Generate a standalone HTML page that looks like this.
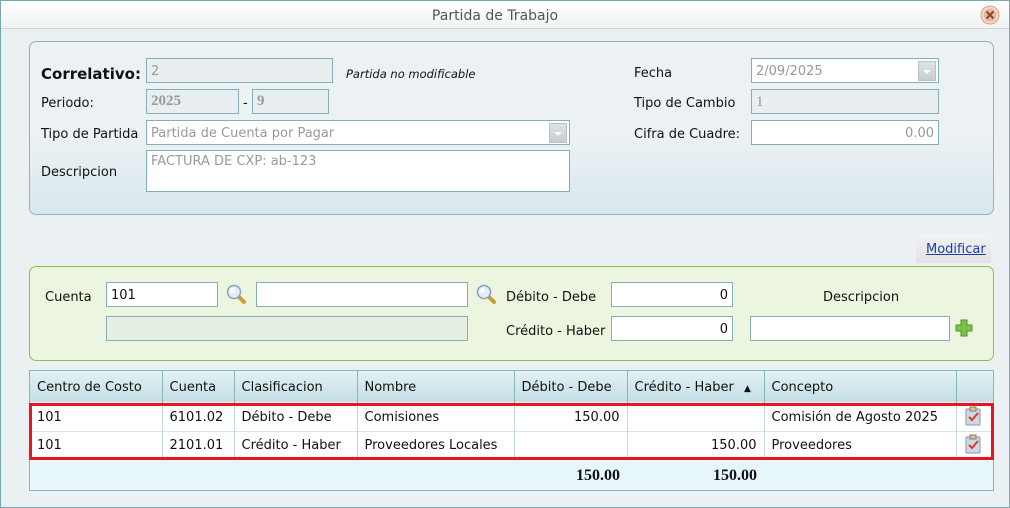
<!DOCTYPE html>
<html><head><meta charset="utf-8"><style>
*{box-sizing:border-box;margin:0;padding:0}
body{width:1010px;height:508px;overflow:hidden;font-family:"DejaVu Sans","Liberation Sans",sans-serif;font-size:13px;color:#111;background:#ebf0f2;position:relative}
.a{position:absolute}
.frame{left:0;top:0;width:1010px;height:508px;border:1px solid #7aa7ae}
.tb{left:1px;top:1px;width:1008px;height:28px;background:linear-gradient(#fff,#f0f2f3);border-bottom:1px solid #d0d6d8}
.in{position:absolute;border:1px solid #82b0b5;background:#fff;height:25px;font-size:13px;padding:5px 4px 0;color:#999;white-space:nowrap;overflow:hidden}
.g{background:#e9eff1}
.lbl{position:absolute;font-size:13px;white-space:nowrap;margin-top:2px}
.dd{position:absolute;top:2px;right:2px;width:18px;height:20px;background:linear-gradient(#dde3e5,#c5cdd0);border:1px solid #b8c2c5}
.dd:after{content:"";position:absolute;left:4px;top:8px;border-left:4px solid transparent;border-right:4px solid transparent;border-top:4px solid #fff}
table{border-collapse:collapse;font-size:13px}
td{border-right:1px solid #c8d8dc;padding:0 7px;white-space:nowrap}
.r{text-align:right}
.ft{border:0;font-weight:bold;font-family:'Liberation Serif',serif;font-size:16px;padding-top:2px}
</style></head><body>
<div class="a frame"></div>
<div class="a tb"></div>
<div class="lbl" style="left:0;width:990px;text-align:center;top:6px;color:#555;font-size:14px">Partida de Trabajo</div>
<svg class="a" style="left:980px;top:5px" width="20" height="20"><circle cx="10" cy="10" r="9" fill="#f4d9cc" stroke="#d7a08a"/><circle cx="10" cy="10" r="6.5" fill="#e8b8a2"/><path d="M6.5 6.5l7 7M13.5 6.5l-7 7" stroke="#8a4a2a" stroke-width="2"/></svg>

<div class="a" style="left:29px;top:41px;width:965px;height:174px;border:1px solid #8ab6bb;border-radius:7px;background:linear-gradient(#ecf1f3 55%,#d9e8ee)"></div>
<div class="lbl" style="left:41px;top:63px;font-weight:bold;font-size:15px">Correlativo:</div>
<div class="in g" style="left:146px;top:58px;width:187px">2</div>
<div class="lbl" style="left:346px;top:65px;font-style:italic;font-size:11.5px">Partida no modificable</div>
<div class="lbl" style="left:41px;top:94px">Periodo:</div>
<div class="in g" style="left:146px;top:89px;width:93px;font-weight:bold;font-family:'Liberation Serif',serif;font-size:15px;padding-top:3px">2025</div>
<div class="lbl" style="left:243px;top:94px">-</div>
<div class="in g" style="left:252px;top:89px;width:77px;font-weight:bold;font-family:'Liberation Serif',serif;font-size:15px;padding-top:3px">9</div>
<div class="lbl" style="left:41px;top:125px">Tipo de Partida</div>
<div class="in" style="left:146px;top:120px;width:424px">Partida de Cuenta por Pagar<div class="dd"></div></div>
<div class="lbl" style="left:41px;top:163px">Descripcion</div>
<div class="in" style="left:146px;top:150px;width:424px;height:42px;padding-top:3px">FACTURA DE CXP: ab-123</div>
<div class="lbl" style="left:634px;top:64px">Fecha</div>
<div class="in" style="left:751px;top:58px;width:188px">2/09/2025<div class="dd"></div></div>
<div class="lbl" style="left:634px;top:94px">Tipo de Cambio</div>
<div class="in g" style="left:751px;top:89px;width:188px;font-family:'Liberation Serif',serif;font-size:15px;padding-top:4px">1</div>
<div class="lbl" style="left:634px;top:125px">Cifra de Cuadre:</div>
<div class="in" style="left:751px;top:120px;width:188px;text-align:right">0.00</div>

<div class="a" style="left:916px;top:235px;width:75px;height:28px;background:linear-gradient(#f2f2f2,#e2e2e2)"></div>
<div class="lbl" style="left:926px;top:240px;color:#1a3fa8;text-decoration:underline">Modificar</div>

<div class="a" style="left:29px;top:266px;width:965px;height:95px;border:1px solid #8fc04a;border-radius:7px;background:#ebf5df"></div>
<div class="lbl" style="left:45px;top:288px">Cuenta</div>
<div class="in" style="left:106px;top:282px;width:112px;color:#111">101</div>
<svg class="a" style="left:225px;top:283px" width="22" height="22"><path d="M13 13l6 6" stroke="#c9a030" stroke-width="4" stroke-linecap="round"/><circle cx="9" cy="9" r="6.5" fill="#dfeefa" stroke="#8aa2b8" stroke-width="1.5"/><circle cx="7.5" cy="7.5" r="2.5" fill="#fff"/></svg>
<div class="in" style="left:256px;top:282px;width:212px"></div>
<svg class="a" style="left:475px;top:283px" width="22" height="22"><path d="M13 13l6 6" stroke="#c9a030" stroke-width="4" stroke-linecap="round"/><circle cx="9" cy="9" r="6.5" fill="#dfeefa" stroke="#8aa2b8" stroke-width="1.5"/><circle cx="7.5" cy="7.5" r="2.5" fill="#fff"/></svg>
<div class="in" style="left:106px;top:316px;width:362px;background:#e6f0e2"></div>
<div class="lbl" style="left:506px;top:288px">Débito - Debe</div>
<div class="in" style="left:611px;top:282px;width:122px;text-align:right;color:#111">0</div>
<div class="lbl" style="left:506px;top:322px">Crédito - Haber</div>
<div class="in" style="left:611px;top:316px;width:122px;text-align:right;color:#111">0</div>
<div class="lbl" style="left:823px;top:288px">Descripcion</div>
<div class="in" style="left:750px;top:316px;width:200px"></div>
<svg class="a" style="left:955px;top:319px" width="18" height="18"><path d="M6 1h6v5h5v6h-5v5H6v-5H1V6h5z" fill="#7cc24a" stroke="#4f8f2a"/></svg>

<div class="a" style="left:29px;top:370px;width:965px;height:121px;border:1px solid #8ab6bb;background:#e6f6fa">
<table style="width:963px">
<tr style="height:32px;background:linear-gradient(#e2f1f4,#c4dfe5);border-bottom:1px solid #8ab6bb">
<td style="width:132px;border-right-color:#8ab6bb;padding-top:2px">Centro de Costo</td><td style="width:72px;border-right-color:#8ab6bb;padding-top:2px">Cuenta</td><td style="width:123px;border-right-color:#8ab6bb;padding-top:2px">Clasificacion</td><td style="width:157px;border-right-color:#8ab6bb;padding-top:2px">Nombre</td><td style="width:113px;border-right-color:#8ab6bb;padding-top:2px">Débito - Debe</td><td style="width:137px;border-right-color:#8ab6bb;padding-top:2px">Crédito - Haber <span style="font-size:9px;margin-left:6px">▲</span></td><td style="width:192px;border-right-color:#8ab6bb;padding-top:2px">Concepto</td><td style="border:0"></td></tr>
<tr style="height:28px;background:#fff;border-bottom:1px solid #d6e2e5"><td>101</td><td>6101.02</td><td>Débito - Debe</td><td>Comisiones</td><td class="r">150.00</td><td></td><td>Comisión de Agosto 2025</td><td style="border:0"></td></tr>
<tr style="height:28px;background:#fff"><td>101</td><td>2101.01</td><td>Crédito - Haber</td><td>Proveedores Locales</td><td></td><td class="r">150.00</td><td>Proveedores</td><td style="border:0"></td></tr>
<tr style="height:31px"><td style="border:0"></td><td style="border:0"></td><td style="border:0"></td><td style="border:0"></td><td class="r ft">150.00</td><td class="r ft">150.00</td><td style="border:0"></td><td style="border:0"></td></tr>
</table></div>
<div class="a" style="left:29px;top:403px;width:965px;height:57px;border:3px solid #e8141e"></div>
<svg class="a" style="left:963px;top:406px" width="20" height="20"><rect x="3" y="3" width="14" height="16" rx="1" fill="#cfd9e6" stroke="#8a96a8"/><rect x="7" y="1" width="6" height="4" fill="#d6c7a4" stroke="#8a7a5a"/><path d="M6 11l3 3 6-7" stroke="#e0352b" stroke-width="2" fill="none"/></svg>
<svg class="a" style="left:963px;top:434px" width="20" height="20"><rect x="3" y="3" width="14" height="16" rx="1" fill="#cfd9e6" stroke="#8a96a8"/><rect x="7" y="1" width="6" height="4" fill="#d6c7a4" stroke="#8a7a5a"/><path d="M6 11l3 3 6-7" stroke="#e0352b" stroke-width="2" fill="none"/></svg>
</body></html>
